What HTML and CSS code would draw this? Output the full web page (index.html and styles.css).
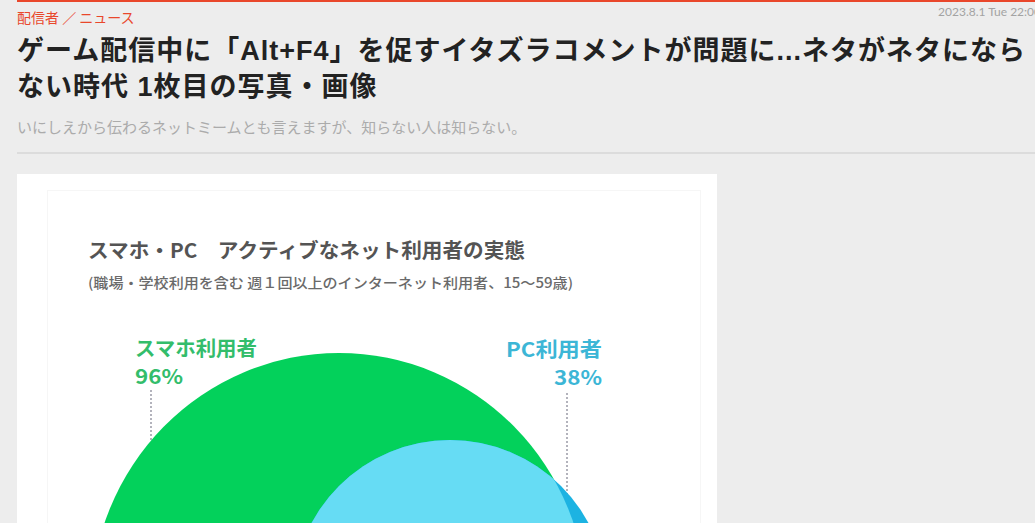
FILE: index.html
```html
<!DOCTYPE html>
<html lang="ja">
<head>
    <meta charset="UTF-8">
    <meta name="viewport" content="width=device-width, initial-scale=1.0">
    <title>ゲーム配信中に「Alt+F4」を促すイタズラコメントが問題に 1枚目の写真・画像</title>
    <link rel="stylesheet" href="styles.css">
</head>
<body>
    <div class="page">
        <header class="article-head">
            <div class="meta">
                <a class="crumbs" href="#">配信者 ／ ニュース</a>
                <time class="date">2023.8.1 Tue 22:00</time>
            </div>
            <h1 class="title">ゲーム配信中に「Alt+F4」を促すイタズラコメントが問題に...ネタがネタにならない時代 1枚目の写真・画像</h1>
            <p class="lead">いにしえから伝わるネットミームとも言えますが、知らない人は知らない。</p>
        </header>

        <figure class="photo">
            <svg class="chart" width="700" height="520" viewBox="0 0 700 520">
                <defs>
                    <clipPath id="smartphone-area">
                        <ellipse cx="322" cy="431" rx="248" ry="252"/>
                    </clipPath>
                </defs>
                <rect class="chart-frame" x="30.5" y="16.5" width="653" height="520"/>

                <text class="chart-title" x="71" y="84" textLength="437" lengthAdjust="spacingAndGlyphs">スマホ・PC　アクティブなネット利用者の実態</text>
                <text class="chart-sub" x="71" y="114" textLength="485" lengthAdjust="spacingAndGlyphs">(職場・学校利用を含む 週１回以上のインターネット利用者、15～59歳)</text>

                <text class="label label-green" x="118" y="182" textLength="122" lengthAdjust="spacingAndGlyphs">スマホ利用者</text>
                <text class="label label-green" x="118" y="210" textLength="48" lengthAdjust="spacingAndGlyphs">96%</text>
                <text class="label label-blue" x="585" y="183" text-anchor="end" textLength="96" lengthAdjust="spacingAndGlyphs">PC利用者</text>
                <text class="label label-blue" x="585" y="211" text-anchor="end" textLength="48" lengthAdjust="spacingAndGlyphs">38%</text>

                <line class="leader" x1="134" y1="216" x2="134" y2="276"/>
                <line class="leader" x1="550" y1="219" x2="550" y2="326"/>

                <ellipse class="smartphone" cx="322" cy="431" rx="248" ry="252"/>
                <circle class="pc-only" cx="433" cy="423" r="157"/>
                <circle class="pc" cx="433" cy="423" r="157" clip-path="url(#smartphone-area)"/>
            </svg>
        </figure>
    </div>
</body>
</html>
```

FILE: styles.css
```css
* {
    margin: 0;
    padding: 0;
    box-sizing: border-box;
}

html, body {
    overflow: hidden;
}

body {
    background: #ededed;
    color: #222;
    font-family: "Liberation Sans", "Noto Sans CJK JP", sans-serif;
}

.page {
    width: 1024px;
    margin-left: 17px;
}

.article-head {
    border-top: 2px solid #e9472b;
    border-bottom: 2px solid #dcdcdc;
    padding-bottom: 15px;
}

.meta {
    display: flex;
    justify-content: space-between;
    align-items: flex-start;
}

.crumbs {
    margin-top: 6px;
    color: #e9472b;
    font-family: "Noto Sans CJK JP", sans-serif;
    font-size: 14px;
    line-height: 18px;
    text-decoration: none;
}

.date {
    margin-top: 3px;
    color: #a3a3a3;
    font-family: Lato, sans-serif;
    font-size: 12px;
    line-height: 14px;
}

.title {
    width: 1030px;
    margin-top: 7px;
    font-size: 27px;
    font-weight: 700;
    line-height: 36px;
    letter-spacing: 1px;
    color: #222;
}

.lead {
    margin-top: 12px;
    color: #ababab;
    font-family: "Noto Sans CJK JP", sans-serif;
    font-size: 15px;
    line-height: 20px;
}

.photo {
    width: 700px;
    margin-top: 20px;
    background: #fff;
}

.chart {
    display: block;
    font-family: "Noto Sans CJK JP", sans-serif;
}

.chart-frame {
    fill: none;
    stroke: #f6f6f6;
}

.chart-title {
    font-size: 20px;
    font-weight: 700;
    fill: #545454;
}

.chart-sub {
    font-size: 14px;
    font-weight: 500;
    fill: #6a6a6a;
}

.label {
    font-size: 20px;
    font-weight: 700;
}

.label-green {
    fill: #33bd6b;
}

.label-blue {
    fill: #3cb6d6;
}

.leader {
    stroke: #9a9aa6;
    stroke-width: 1.5;
    stroke-dasharray: 2 2;
}

.smartphone {
    fill: #03d15b;
}

.pc-only {
    fill: #1cb3e2;
}

.pc {
    fill: #66dcf4;
}
```
